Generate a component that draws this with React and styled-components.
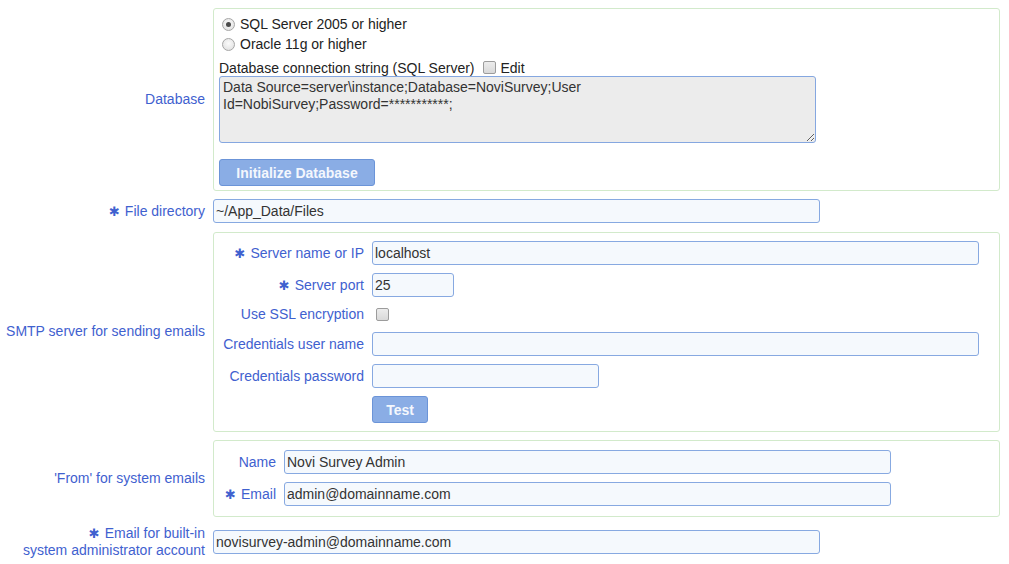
import React from 'react'
import styled, { createGlobalStyle } from 'styled-components'

var Global = createGlobalStyle`
  body {
    margin: 0;
    background: #fff;
    font-family: "Liberation Sans", Arial, sans-serif;
    font-size: 14px;
    color: #333;
  }
`

var Form = styled.div`
  display: grid;
  grid-template-columns: 205px 787px;
  column-gap: 8px;
  row-gap: 8px;
  align-items: center;
  padding-top: 8px;
`

var Label = styled.div`
  text-align: right;
  color: #3f61cf;
  line-height: 17px;
`

var Star = styled.span`
  font-family: "DejaVu Sans", sans-serif;
  font-size: 13px;
  margin-right: 5px;
`

var Box = styled.div`
  border: 1px solid #d2eacb;
  border-radius: 3px;
  margin-top: ${p => p.mt || 0}px;
  padding: ${p => p.pad || '8px 8px 8px 5px'};
`

var RadioRow = styled.label`
  display: flex;
  align-items: center;
  height: 20px;
  color: #222;
`

var Radio = styled.input.attrs({ type: 'radio' })`
  appearance: none;
  width: 13px;
  height: 13px;
  margin: 0 5px 0 3px;
  border: 1px solid #a6a6a6;
  border-radius: 50%;
  background: radial-gradient(circle at 50% 40%, #fbfbfb 0%, #dcdcdc 100%);
  position: relative;
  &:checked::after {
    content: "";
    position: absolute;
    left: 3px;
    top: 3px;
    width: 5px;
    height: 5px;
    border-radius: 50%;
    background: #4a4a4a;
  }
`

var Check = styled.input.attrs({ type: 'checkbox' })`
  appearance: none;
  width: 13px;
  height: 13px;
  margin: ${p => p.m || '0 5px 0 8px'};
  border: 1px solid #9c9c9c;
  border-radius: 2px;
  background: linear-gradient(#ececec, #d9d9d9);
`

var ConnLabel = styled.div`
  display: flex;
  align-items: center;
  margin-top: 5px;
  height: 17px;
  color: #222;
`

var Area = styled.textarea`
  display: block;
  box-sizing: border-box;
  width: 597px;
  height: 67px;
  margin: 0;
  padding: 2px 3px;
  font: 14px/17px "Liberation Sans", Arial, sans-serif;
  color: #333;
  background: #ececec;
  border: 1px solid #85a7e0;
  border-radius: 3px;
  resize: both;
`

var Button = styled.button`
  display: block;
  box-sizing: border-box;
  width: ${p => p.w}px;
  height: 27px;
  margin-top: ${p => p.mt || 0}px;
  padding: 0;
  font: bold 14px "Liberation Sans", Arial, sans-serif;
  color: #f4f7fd;
  background: #8aade5;
  border: 1px solid #6b94d8;
  border-radius: 3px;
`

var Input = styled.input`
  display: block;
  box-sizing: border-box;
  width: ${p => p.w || 607}px;
  height: 24px;
  margin: 0;
  padding: 0 2px;
  font: 14px "Liberation Sans", Arial, sans-serif;
  color: #333;
  background: #f5f9fd;
  border: 1px solid #87a9e1;
  border-radius: 3px;
`

var Inner = styled.div`
  display: grid;
  grid-template-columns: ${p => p.lw}px 1fr;
  column-gap: 8px;
  row-gap: 8px;
  align-items: center;
`

var CheckCell = styled.div`
  height: 19px;
  display: flex;
  align-items: center;
`

var Spacer = styled.div``

var req = <Star>✱</Star>

export default function App() {
  return (
    <>
      <Global />
      <Form>
        <Label>Database</Label>
        <Box pad="5px 5px 4px 5px">
          <RadioRow><Radio name="db" defaultChecked />SQL Server 2005 or higher</RadioRow>
          <RadioRow><Radio name="db" />Oracle 11g or higher</RadioRow>
          <ConnLabel>Database connection string (SQL Server)<Check />Edit</ConnLabel>
          <Area readOnly defaultValue={'Data Source=server\\instance;Database=NoviSurvey;User Id=NobiSurvey;Password=***********;'} />
          <Button w={156} mt={16}>Initialize Database</Button>
        </Box>

        <Label>{req}File directory</Label>
        <Input defaultValue="~/App_Data/Files" />

        <Label>SMTP server for sending emails</Label>
        <Box mt={1} pad="8px 8px 8px 9px">
          <Inner lw={141}>
            <Label>{req}Server name or IP</Label>
            <Input defaultValue="localhost" />
            <Label>{req}Server port</Label>
            <Input w={82} defaultValue="25" />
            <Label>Use SSL encryption</Label>
            <CheckCell><Check m="0 0 0 4px" /></CheckCell>
            <Label>Credentials user name</Label>
            <Input />
            <Label>Credentials password</Label>
            <Input w={227} type="text" />
            <Spacer />
            <Button w={56}>Test</Button>
          </Inner>
        </Box>

        <Label>'From' for system emails</Label>
        <Box pad="9px 8px 10px 9px">
          <Inner lw={53}>
            <Label>Name</Label>
            <Input defaultValue="Novi Survey Admin" />
            <Label>{req}Email</Label>
            <Input defaultValue="admin@domainname.com" />
          </Inner>
        </Box>

        <Label>{req}Email for built-in<br />system administrator account</Label>
        <Input defaultValue="novisurvey-admin@domainname.com" />
      </Form>
    </>
  )
}
